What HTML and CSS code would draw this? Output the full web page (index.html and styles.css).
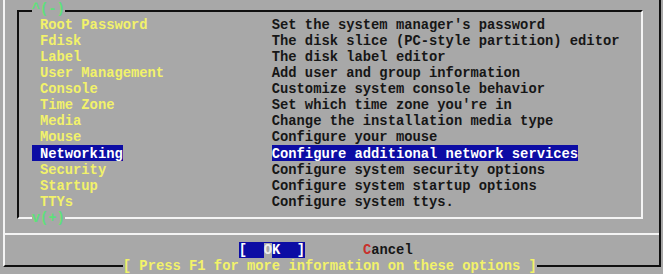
FILE: index.html
```html
<!DOCTYPE html>
<html lang="en">
<head>
    <meta charset="UTF-8">
    <title>Configuration Menu</title>
    <link rel="stylesheet" href="styles.css">
</head>
<body>

    <div class="screen">
        <div class="dialog">

            <!-- Menu list -->
            <div class="menu-box">
                <span class="scroll scroll-up">^(-)</span>

                <div class="item"><span class="tag"> Root Password</span><span class="desc">Set the system manager's password</span></div>
                <div class="item"><span class="tag"> Fdisk</span><span class="desc">The disk slice (PC-style partition) editor</span></div>
                <div class="item"><span class="tag"> Label</span><span class="desc">The disk label editor</span></div>
                <div class="item"><span class="tag"> User Management</span><span class="desc">Add user and group information</span></div>
                <div class="item"><span class="tag"> Console</span><span class="desc">Customize system console behavior</span></div>
                <div class="item"><span class="tag"> Time Zone</span><span class="desc">Set which time zone you're in</span></div>
                <div class="item"><span class="tag"> Media</span><span class="desc">Change the installation media type</span></div>
                <div class="item"><span class="tag"> Mouse</span><span class="desc">Configure your mouse</span></div>
                <div class="item selected"><span class="tag"> Networking</span><span class="desc">Configure additional network services</span></div>
                <div class="item"><span class="tag"> Security</span><span class="desc">Configure system security options</span></div>
                <div class="item"><span class="tag"> Startup</span><span class="desc">Configure system startup options</span></div>
                <div class="item"><span class="tag"> TTYs</span><span class="desc">Configure system ttys.</span></div>

                <span class="scroll scroll-down">v(+)</span>
            </div>

            <div class="separator"></div>

            <!-- Buttons -->
            <div class="buttons">
                <span class="btn btn-active">[  <span class="cursor">O</span>K  ]</span>
                <span class="btn"><span class="hotkey">C</span>ancel</span>
            </div>

            <span class="help">[ Press F1 for more information on these options ]</span>
        </div>
    </div>

</body>
</html>
```

FILE: styles.css
```css
body {
    margin: 0;
    background: #a8a8a8;
}

.screen {
    width: 663px;
    height: 274px;
    overflow: hidden;
    background: #a8a8a8;
    font-family: 'Liberation Mono', 'DejaVu Sans Mono', monospace;
    font-size: 13.8125px;
    font-weight: bold;
    line-height: 16.118px;
    color: #161616;
}

/* outer dialog: light top/left, dark bottom/right */
.dialog {
    position: relative;
    box-sizing: border-box;
    width: 658px;
    margin-left: 3px;
    padding: 9.5px 0 7.6px 0;
    border-left: 2px solid #f4f4f4;
    border-right: 2px solid #101010;
    border-bottom: 2px solid #101010;
}

/* inner menu box: dark top/left, light bottom/right */
.menu-box {
    position: relative;
    box-sizing: border-box;
    width: 626px;
    margin-left: 12px;
    padding: 4.618px 0 7.97px 12.65px;
    border-top: 2px solid #101010;
    border-left: 2px solid #101010;
    border-right: 2px solid #f4f4f4;
    border-bottom: 2px solid #f4f4f4;
}

.item {
    display: flex;
    height: 16.118px;
}

/* one text cell row: nudge glyphs down to sit like the VGA font */
.tag,
.desc,
.btn,
.scroll,
.help {
    box-sizing: border-box;
    height: 16.118px;
    padding-top: 1.6px;
    white-space: pre;
}

.tag {
    width: 29ch;
    color: #f2f26a;
}

.desc {
    color: #161616;
}

.selected .tag,
.selected .desc {
    color: #ffffff;
}

.selected .tag {
    width: auto;
    margin-right: 18ch;
    background: #0c0ca4;
}

.selected .desc {
    background: #0c0ca4;
}

.scroll {
    position: absolute;
    left: 12.65px;
    background: #a8a8a8;
    color: #5ee07a;
}

.scroll-up {
    top: -11.5px;
}

.scroll-down {
    top: 198.03px;
}

.separator {
    margin-top: 13.5px;
    border-top: 2px solid #f4f4f4;
}

.buttons {
    display: flex;
    gap: 7ch;
    height: 16.118px;
    margin-top: 6.77px;
    padding-left: 233.8px;
}

.btn-active {
    background: #0c0ca4;
    color: #ffffff;
}

.cursor {
    background: #a8a8a8;
    color: #ececec;
}

.hotkey {
    color: #c8302c;
}

/* label sitting on the bottom border */
.help {
    position: absolute;
    top: 257.9px;
    left: 117.8px;
    background: #a8a8a8;
    color: #f2f26a;
}
```
